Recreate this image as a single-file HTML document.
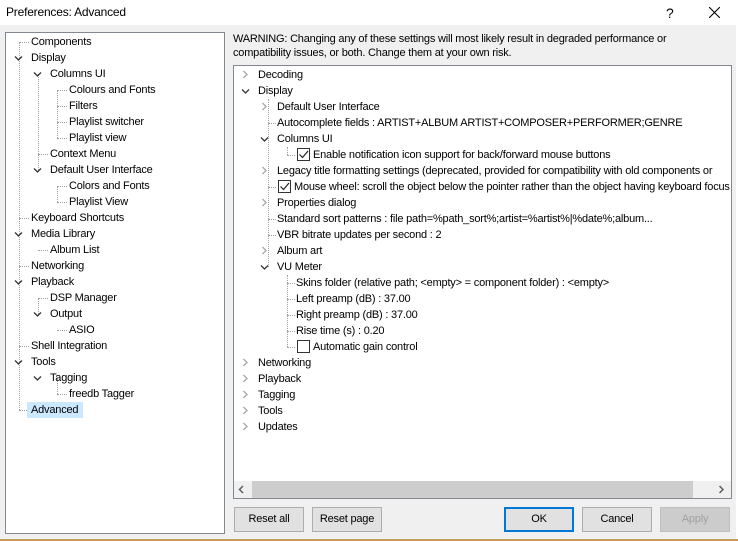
<!DOCTYPE html>
<html><head><meta charset="utf-8"><style>
*{margin:0;padding:0;box-sizing:border-box}
body{width:738px;height:541px;background:#f0f0f0;font-family:"Liberation Sans",sans-serif;font-size:11px;letter-spacing:-0.2px;color:#000;position:relative;overflow:hidden}
.title{position:absolute;left:0;top:0;width:736px;height:25px;background:#fff}
.t{position:absolute;white-space:nowrap;line-height:16px;height:16px}
.box{position:absolute;background:#fff;border:1px solid #828790;overflow:hidden}
.v{position:absolute;border-left:1px dotted #a0a0a0;width:0}
.h{position:absolute;border-top:1px dotted #a0a0a0;height:0}
.cb{position:absolute;width:13px;height:13px;border:1px solid #333;background:#fff}
.btn{position:absolute;top:507px;height:25px;border:1px solid #adadad;background:#e1e1e1;text-align:center;line-height:23px}
svg.c{position:absolute;width:9px;height:9px}
</style></head><body>
<div class="title"></div>
<div class="t" style="left:6px;top:4px;font-size:12px">Preferences: Advanced</div>
<div class="t" style="left:666px;top:5px;font-size:14px">?</div>
<svg style="position:absolute;left:709px;top:7px" width="11" height="11"><path d="M0 0L11 11M11 0L0 11" stroke="#000" stroke-width="1.1"/></svg>
<div style="position:absolute;left:736px;top:0;width:2px;height:541px;background:#fff"></div>
<div style="position:absolute;left:0;top:539px;width:738px;height:2px;background:#c69a5a"></div>

<div class="box" style="left:5px;top:32px;width:220px;height:502px">
<div style="position:relative;left:-6px;top:-33px">
<div class="v" style="left:19px;top:42px;height:368px"></div>
<div class="v" style="left:38px;top:74px;height:96px"></div>
<div class="v" style="left:57px;top:90px;height:48px"></div>
<div class="v" style="left:57px;top:186px;height:16px"></div>
<div class="v" style="left:38px;top:298px;height:16px"></div>
<div class="v" style="left:57px;top:378px;height:16px"></div>
<div class="h" style="left:19px;top:42px;width:10px"></div>
<div class="h" style="left:38px;top:154px;width:10px"></div>
<div class="h" style="left:19px;top:218px;width:10px"></div>
<div class="h" style="left:38px;top:250px;width:10px"></div>
<div class="h" style="left:19px;top:266px;width:10px"></div>
<div class="h" style="left:38px;top:298px;width:10px"></div>
<div class="h" style="left:19px;top:346px;width:10px"></div>
<div class="h" style="left:19px;top:410px;width:8px"></div>
<div class="h" style="left:57px;top:90px;width:10px"></div><div class="h" style="left:57px;top:106px;width:10px"></div><div class="h" style="left:57px;top:122px;width:10px"></div><div class="h" style="left:57px;top:138px;width:10px"></div>
<div class="h" style="left:57px;top:186px;width:10px"></div><div class="h" style="left:57px;top:202px;width:10px"></div>
<div class="h" style="left:57px;top:330px;width:10px"></div><div class="h" style="left:57px;top:394px;width:10px"></div>
<div style="position:absolute;left:27px;top:402px;width:56px;height:16px;background:#cce8ff"></div>
<svg class="c" style="left:14px;top:54px"><path d="M1 2.5L4.5 6L8 2.5" fill="none" stroke="#333" stroke-width="1.3"/></svg>
<svg class="c" style="left:33px;top:70px"><path d="M1 2.5L4.5 6L8 2.5" fill="none" stroke="#333" stroke-width="1.3"/></svg>
<svg class="c" style="left:33px;top:166px"><path d="M1 2.5L4.5 6L8 2.5" fill="none" stroke="#333" stroke-width="1.3"/></svg>
<svg class="c" style="left:14px;top:230px"><path d="M1 2.5L4.5 6L8 2.5" fill="none" stroke="#333" stroke-width="1.3"/></svg>
<svg class="c" style="left:14px;top:278px"><path d="M1 2.5L4.5 6L8 2.5" fill="none" stroke="#333" stroke-width="1.3"/></svg>
<svg class="c" style="left:33px;top:310px"><path d="M1 2.5L4.5 6L8 2.5" fill="none" stroke="#333" stroke-width="1.3"/></svg>
<svg class="c" style="left:14px;top:358px"><path d="M1 2.5L4.5 6L8 2.5" fill="none" stroke="#333" stroke-width="1.3"/></svg>
<svg class="c" style="left:33px;top:374px"><path d="M1 2.5L4.5 6L8 2.5" fill="none" stroke="#333" stroke-width="1.3"/></svg>
<div class="t" style="left:31px;top:34px">Components</div>
<div class="t" style="left:31px;top:50px">Display</div>
<div class="t" style="left:50px;top:66px">Columns UI</div>
<div class="t" style="left:69px;top:82px">Colours and Fonts</div>
<div class="t" style="left:69px;top:98px">Filters</div>
<div class="t" style="left:69px;top:114px">Playlist switcher</div>
<div class="t" style="left:69px;top:130px">Playlist view</div>
<div class="t" style="left:50px;top:146px">Context Menu</div>
<div class="t" style="left:50px;top:162px">Default User Interface</div>
<div class="t" style="left:69px;top:178px">Colors and Fonts</div>
<div class="t" style="left:69px;top:194px">Playlist View</div>
<div class="t" style="left:31px;top:210px">Keyboard Shortcuts</div>
<div class="t" style="left:31px;top:226px">Media Library</div>
<div class="t" style="left:50px;top:242px">Album List</div>
<div class="t" style="left:31px;top:258px">Networking</div>
<div class="t" style="left:31px;top:274px">Playback</div>
<div class="t" style="left:50px;top:290px">DSP Manager</div>
<div class="t" style="left:50px;top:306px">Output</div>
<div class="t" style="left:69px;top:322px">ASIO</div>
<div class="t" style="left:31px;top:338px">Shell Integration</div>
<div class="t" style="left:31px;top:354px">Tools</div>
<div class="t" style="left:50px;top:370px">Tagging</div>
<div class="t" style="left:69px;top:386px">freedb Tagger</div>
<div class="t" style="left:31px;top:402px">Advanced</div>
</div></div>

<div class="t" style="left:233px;top:31px">WARNING: Changing any of these settings will most likely result in degraded performance or</div>
<div class="t" style="left:233px;top:45px">compatibility issues, or both. Change them at your own risk.</div>

<div class="box" style="left:233px;top:65px;width:499px;height:434px">
<div style="position:relative;left:-234px;top:-66px">
<div class="v" style="left:268px;top:99px;height:168px"></div>
<div class="v" style="left:287px;top:147px;height:8px"></div>
<div class="v" style="left:287px;top:275px;height:72px"></div>
<div class="h" style="left:268px;top:123px;width:8px"></div>
<div class="h" style="left:268px;top:187px;width:8px"></div>
<div class="h" style="left:268px;top:219px;width:8px"></div>
<div class="h" style="left:268px;top:235px;width:8px"></div>
<div class="h" style="left:287px;top:155px;width:8px"></div>
<div class="h" style="left:287px;top:283px;width:8px"></div><div class="h" style="left:287px;top:299px;width:8px"></div><div class="h" style="left:287px;top:315px;width:8px"></div><div class="h" style="left:287px;top:331px;width:8px"></div><div class="h" style="left:287px;top:347px;width:8px"></div>
<svg class="c" style="left:241px;top:70px"><path d="M2.5 1L6 4.5L2.5 8" fill="none" stroke="#a6a6a6" stroke-width="1.3"/></svg>
<svg class="c" style="left:241px;top:87px"><path d="M1 2.5L4.5 6L8 2.5" fill="none" stroke="#333" stroke-width="1.3"/></svg>
<svg class="c" style="left:260px;top:102px"><path d="M2.5 1L6 4.5L2.5 8" fill="none" stroke="#a6a6a6" stroke-width="1.3"/></svg>
<svg class="c" style="left:260px;top:135px"><path d="M1 2.5L4.5 6L8 2.5" fill="none" stroke="#333" stroke-width="1.3"/></svg>
<svg class="c" style="left:260px;top:166px"><path d="M2.5 1L6 4.5L2.5 8" fill="none" stroke="#a6a6a6" stroke-width="1.3"/></svg>
<svg class="c" style="left:260px;top:198px"><path d="M2.5 1L6 4.5L2.5 8" fill="none" stroke="#a6a6a6" stroke-width="1.3"/></svg>
<svg class="c" style="left:260px;top:246px"><path d="M2.5 1L6 4.5L2.5 8" fill="none" stroke="#a6a6a6" stroke-width="1.3"/></svg>
<svg class="c" style="left:260px;top:263px"><path d="M1 2.5L4.5 6L8 2.5" fill="none" stroke="#333" stroke-width="1.3"/></svg>
<svg class="c" style="left:241px;top:358px"><path d="M2.5 1L6 4.5L2.5 8" fill="none" stroke="#a6a6a6" stroke-width="1.3"/></svg>
<svg class="c" style="left:241px;top:374px"><path d="M2.5 1L6 4.5L2.5 8" fill="none" stroke="#a6a6a6" stroke-width="1.3"/></svg>
<svg class="c" style="left:241px;top:390px"><path d="M2.5 1L6 4.5L2.5 8" fill="none" stroke="#a6a6a6" stroke-width="1.3"/></svg>
<svg class="c" style="left:241px;top:406px"><path d="M2.5 1L6 4.5L2.5 8" fill="none" stroke="#a6a6a6" stroke-width="1.3"/></svg>
<svg class="c" style="left:241px;top:422px"><path d="M2.5 1L6 4.5L2.5 8" fill="none" stroke="#a6a6a6" stroke-width="1.3"/></svg>
<div class="cb" style="left:297px;top:148px"><svg width="11" height="11" style="position:absolute;left:0;top:0"><path d="M1.5 5.5L4.5 8.5L10 2" fill="none" stroke="#222" stroke-width="1.2"/></svg></div>
<div class="cb" style="left:278px;top:180px"><svg width="11" height="11" style="position:absolute;left:0;top:0"><path d="M1.5 5.5L4.5 8.5L10 2" fill="none" stroke="#222" stroke-width="1.2"/></svg></div>
<div class="cb" style="left:297px;top:340px"></div>
<div class="t" style="left:258px;top:67px">Decoding</div>
<div class="t" style="left:258px;top:83px">Display</div>
<div class="t" style="left:277px;top:99px">Default User Interface</div>
<div class="t" style="left:277px;top:115px">Autocomplete fields : ARTIST+ALBUM ARTIST+COMPOSER+PERFORMER;GENRE</div>
<div class="t" style="left:277px;top:131px">Columns UI</div>
<div class="t" style="left:313px;top:147px">Enable notification icon support for back/forward mouse buttons</div>
<div class="t" style="left:277px;top:163px">Legacy title formatting settings (deprecated, provided for compatibility with old components or</div>
<div class="t" style="left:294px;top:179px">Mouse wheel: scroll the object below the pointer rather than the object having keyboard focus</div>
<div class="t" style="left:277px;top:195px">Properties dialog</div>
<div class="t" style="left:277px;top:211px">Standard sort patterns : file path=%path_sort%;artist=%artist%|%date%;album...</div>
<div class="t" style="left:277px;top:227px">VBR bitrate updates per second : 2</div>
<div class="t" style="left:277px;top:243px">Album art</div>
<div class="t" style="left:277px;top:259px">VU Meter</div>
<div class="t" style="left:296px;top:275px">Skins folder (relative path; &lt;empty&gt; = component folder) : &lt;empty&gt;</div>
<div class="t" style="left:296px;top:291px">Left preamp (dB) : 37.00</div>
<div class="t" style="left:296px;top:307px">Right preamp (dB) : 37.00</div>
<div class="t" style="left:296px;top:323px">Rise time (s) : 0.20</div>
<div class="t" style="left:313px;top:339px">Automatic gain control</div>
<div class="t" style="left:258px;top:355px">Networking</div>
<div class="t" style="left:258px;top:371px">Playback</div>
<div class="t" style="left:258px;top:387px">Tagging</div>
<div class="t" style="left:258px;top:403px">Tools</div>
<div class="t" style="left:258px;top:419px">Updates</div>
<div style="position:absolute;left:234px;top:481px;width:497px;height:17px;background:#f0f0f0"></div>
<div style="position:absolute;left:252px;top:481px;width:441px;height:17px;background:#cdcdcd"></div>
<svg class="c" style="left:237px;top:485px"><path d="M6 1L2.5 4.5L6 8" fill="none" stroke="#606060" stroke-width="1.5"/></svg>
<svg class="c" style="left:717px;top:485px"><path d="M2.5 1L6 4.5L2.5 8" fill="none" stroke="#606060" stroke-width="1.5"/></svg>
</div></div>

<div class="btn" style="left:234px;width:70px">Reset all</div>
<div class="btn" style="left:312px;width:70px">Reset page</div>
<div class="btn" style="left:504px;width:70px;border:2px solid #0078d7;line-height:21px">OK</div>
<div class="btn" style="left:582px;width:70px">Cancel</div>
<div class="btn" style="left:660px;width:70px;color:#a0a0a0;border-color:#bfbfbf;background:#cccccc">Apply</div>
</body></html>
